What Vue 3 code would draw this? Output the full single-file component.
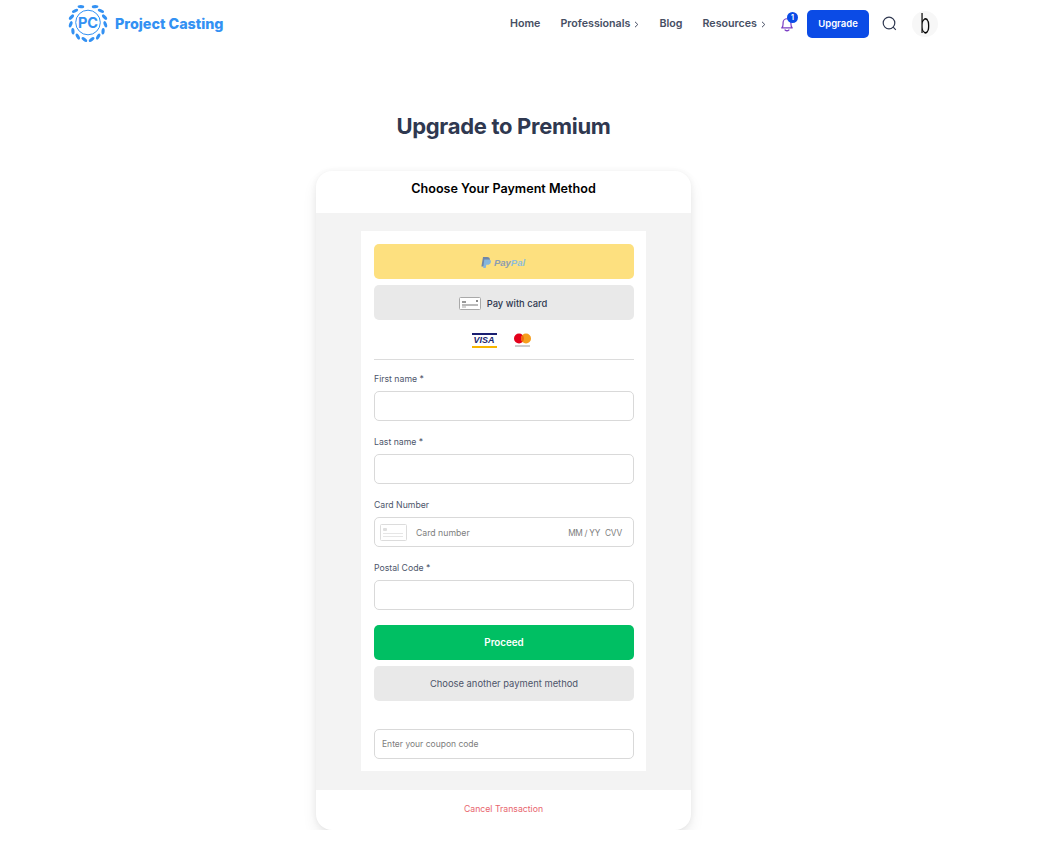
<template>
  <div class="page">
    <header class="nav">
      <a class="logo" href="#">
        <span class="logo-mark">
          <svg class="laurel" width="40" height="40" viewBox="0 0 40 40">
            <circle cx="20" cy="18.500" r="12.300" fill="none" stroke="#3391f3" stroke-width="1" />
            <g fill="#3391f3">
              <ellipse v-for="leaf in leaves" :key="leaf.id" :cx="leaf.x" :cy="leaf.y" rx="1.600" ry="3.300" :transform="`rotate(${leaf.r} ${leaf.x} ${leaf.y})`" />
            </g>
          </svg>
          <span class="logo-pc">PC</span>
        </span>
        <span class="logo-text">Project Casting</span>
      </a>

      <nav class="menu">
        <a v-for="item in menuItems" :key="item.label" class="menu-link" href="#">
          {{ item.label }}
          <svg v-if="item.arrow" width="5" height="7" viewBox="0 0 5 7" class="chev"><path d="M1 .8 3.800 3.500 1 6.200" fill="none" stroke="#464e63" stroke-width="1" /></svg>
        </a>
      </nav>

      <span class="bell">
        <svg width="14" height="16" viewBox="0 0 16 18" fill="none" stroke="#7b3fc4" stroke-width="1.400">
          <path d="M2 13.500c1.200-1.200 1.500-2.200 1.500-4.500V7.600C3.500 5 5.500 3 8 3s4.500 2 4.500 4.600V9c0 2.300.3 3.300 1.500 4.500z" stroke-linejoin="round" />
          <path d="M5.800 15.800c1.200 1 3.200 1 4.400 0" stroke-linecap="round" />
        </svg>
        <span class="bell-badge">1</span>
      </span>
      <button class="upgrade">Upgrade</button>
      <svg class="search" width="15" height="15" viewBox="0 0 15 15" fill="none" stroke="#2f3850" stroke-width="1.200">
        <circle cx="7" cy="7" r="5.800" />
        <path d="m11.200 11.200 2.600 2.600" />
      </svg>
      <span class="avatar"><span class="avatar-letter">b</span></span>
    </header>

    <main class="main">
      <h1 class="title">Upgrade to Premium</h1>

      <section class="card">
        <div class="card-head">Choose Your Payment Method</div>
        <div class="card-body">
          <div class="panel">
            <button class="pay pay-paypal">
              <svg width="10" height="12" viewBox="0 0 10 12">
                <path d="M2 0h4c2.200 0 3.200 1.200 2.800 3-.4 2-1.800 3-3.800 3H3.500L2.800 9.500H.4z" fill="#6f86a8" />
                <path d="M3.300 2.500h4.200c1.800 0 2.700.9 2.400 2.500-.3 1.900-1.700 2.800-3.500 2.800H5.300l-.6 3.200H2.200z" fill="#86b6dc" />
              </svg>
              <span class="paypal-word"><b>Pay</b><i>Pal</i></span>
            </button>
            <button class="pay pay-card">
              <svg width="22" height="13" viewBox="0 0 22 13">
                <rect x=".5" y=".5" width="21" height="12" rx="1" fill="#fff" stroke="#a9a9a9" />
                <rect x="3" y="4" width="4" height="2" fill="#999" />
                <rect x="3" y="7.500" width="16" height="1" fill="#777" />
                <rect x="3" y="9.500" width="4" height="1" fill="#aaa" />
                <rect x="17" y="3" width="2" height="2" fill="#888" />
              </svg>
              <span>Pay with card</span>
            </button>

            <div class="brands">
              <span class="visa">VISA</span>
              <svg width="17" height="15" viewBox="0 0 17 15">
                <circle cx="5" cy="5.500" r="5" fill="#e3001b" />
                <circle cx="12" cy="5.500" r="5" fill="#f59e1d" />
                <path d="M8.500 2a5 5 0 0 1 0 7 5 5 0 0 1 0-7z" fill="#f2650f" />
                <rect x="1" y="12.500" width="15" height="1" fill="#9a9a9a" />
              </svg>
            </div>
            <hr class="rule" />

            <label class="field-label">First name *</label>
            <div class="input"></div>
            <label class="field-label">Last name *</label>
            <div class="input"></div>
            <label class="field-label">Card Number</label>
            <div class="input card-input">
              <svg width="27" height="17" viewBox="0 0 27 17">
                <rect x=".5" y=".5" width="26" height="16" rx="1" fill="#fff" stroke="#dcdcdc" />
                <rect x="3" y="4" width="4" height="3" rx="1" fill="#dedede" />
                <rect x="3" y="9" width="20" height="1" fill="#e6e6e6" />
                <rect x="3" y="12" width="20" height="1" fill="#e6e6e6" />
              </svg>
              <span class="ph-number">Card number</span>
              <span class="ph-date">MM / YY</span>
              <span class="ph-cvv">CVV</span>
            </div>
            <label class="field-label">Postal Code *</label>
            <div class="input"></div>

            <button class="pay proceed">Proceed</button>
            <button class="pay another">Choose another payment method</button>

            <div class="input coupon">Enter your coupon code</div>
          </div>
        </div>
        <div class="card-foot">Cancel Transaction</div>
      </section>
    </main>
  </div>
</template>

<script setup>
const menuItems = [
  { label: 'Home' },
  { label: 'Professionals', arrow: true },
  { label: 'Blog' },
  { label: 'Resources', arrow: true }
]

// laurel leaves around the PC badge
const leaves = []
for (let i = 0; i < 7; i++) {
  const deg = 258 - i * 24
  const a = deg * Math.PI / 180
  const x = 20 + Math.cos(a) * 17.4
  const y = 18.5 - Math.sin(a) * 17.4
  const r = 180 - deg + 25
  leaves.push({ id: `l${i}`, x, y, r })
  leaves.push({ id: `r${i}`, x: 40 - x, y, r: -r })
}
</script>

<style>
html, body {
  margin: 0;
  background: #fff;
}
</style>

<style scoped>
.page {
  width: 1007px;
  font-family: Inter, "Liberation Sans", sans-serif;
  color: #2f3850;
}

/* Navigation */
.nav {
  display: flex;
  align-items: center;
  height: 47px;
  padding-left: 68px;
  padding-right: 69px;
}

.logo {
  display: flex;
  align-items: center;
  text-decoration: none;
  margin-right: auto;
}

.logo-mark {
  position: relative;
  width: 40px;
  height: 40px;
  display: block;
}

.laurel {
  display: block;
}

.logo-pc {
  position: absolute;
  inset: 0 0 3px 0;
  display: flex;
  align-items: center;
  justify-content: center;
  font-size: 14.500px;
  font-weight: 700;
  color: #3391f3;
}

.logo-text {
  margin-left: 7px;
  font-size: 14.300px;
  font-weight: 800;
  color: #3391f3;
}

.menu {
  display: flex;
  align-items: center;
  gap: 20px;
}

.menu-link {
  display: flex;
  align-items: center;
  gap: 4px;
  font-size: 10.700px;
  font-weight: 600;
  color: #464e63;
  text-decoration: none;
}

.chev {
  margin-top: 1px;
}

.bell {
  position: relative;
  display: block;
  width: 14px;
  height: 16px;
  margin-left: 14px;
  margin-top: 1px;
}

.bell svg {
  display: block;
}

.bell-badge {
  position: absolute;
  top: -4px;
  right: -4px;
  width: 11px;
  height: 11px;
  border-radius: 50%;
  background: #0b4be6;
  color: #fff;
  font-size: 7px;
  font-weight: 700;
  line-height: 11px;
  text-align: center;
}

.upgrade {
  width: 62px;
  height: 28px;
  margin-left: 13px;
  border: none;
  border-radius: 5px;
  background: #0b4be6;
  color: #fff;
  font-family: inherit;
  font-size: 9.500px;
  font-weight: 600;
  padding: 0;
}

.search {
  margin-left: 13px;
}

.avatar {
  width: 26px;
  height: 26px;
  margin-left: 15px;
  border-radius: 50%;
  background: #f7f7f7;
  display: flex;
  justify-content: center;
}

.avatar-letter {
  display: block;
  color: #000;
  font-size: 27px;
  font-weight: 300;
  line-height: 26px;
  transform: scaleX(0.62);
  will-change: transform;
}

/* Main */
.main {
  display: flex;
  flex-direction: column;
  align-items: center;
}

.title {
  margin: 64px 0 30px;
  font-size: 22px;
  line-height: 30px;
  font-weight: 700;
  letter-spacing: -0.3px;
  color: #2f3850;
}

.card {
  width: 375px;
  border-radius: 16px;
  background: #fff;
  box-shadow: 0 8px 16px -2px rgba(0, 0, 0, 0.1), 0 0 6px rgba(0, 0, 0, 0.06);
  overflow: hidden;
}

.card-head {
  height: 42px;
  padding-top: 10px;
  box-sizing: border-box;
  text-align: center;
  font-size: 12.600px;
  line-height: 16px;
  font-weight: 600;
  color: #000;
}

.card-body {
  background: #f3f3f3;
  padding: 18px 45px 19px;
}

.panel {
  background: #fff;
  padding: 13px 12px 12px 13px;
  height: 540px;
  box-sizing: border-box;
  display: flex;
  flex-direction: column;
}

.pay {
  flex: none;
  display: flex;
  align-items: center;
  justify-content: center;
  height: 35px;
  border: none;
  border-radius: 5px;
  padding: 0;
  font-family: inherit;
  font-size: 9.400px;
  font-weight: 500;
  color: #2f3850;
}

.pay-paypal {
  background: #fde07f;
  gap: 3px;
  padding: 2px 2px 0 0;
}

.paypal-word {
  font-family: "Liberation Sans", sans-serif;
  font-size: 9.500px;
  font-style: italic;
  font-weight: 700;
}

.paypal-word b {
  color: #8d9db0;
}

.paypal-word i {
  color: #8fbedb;
}

.pay-card {
  margin-top: 6px;
  background: #e9e9e9;
  gap: 6px;
  padding-right: 2px;
  padding-top: 1px;
}

.brands {
  flex: none;
  display: flex;
  align-items: flex-start;
  justify-content: center;
  gap: 17px;
  height: 17px;
  margin-top: 13px;
  padding-right: 6px;
}

.visa {
  width: 25px;
  height: 15px;
  box-sizing: border-box;
  border-top: 2px solid #1a1f71;
  border-bottom: 2px solid #f7b600;
  font-family: "Liberation Sans", sans-serif;
  font-size: 9px;
  font-weight: 700;
  font-style: italic;
  line-height: 11px;
  text-align: center;
  color: #1a1f71;
}

.rule {
  flex: none;
  margin: 9px 0 0;
  border: none;
  border-top: 1px solid #dcdcdc;
}

.field-label {
  flex: none;
  display: block;
  margin-top: 13px;
  height: 12px;
  font-size: 8.700px;
  line-height: 12px;
  color: #4d556a;
}

.input {
  flex: none;
  height: 30px;
  margin-top: 6px;
  margin-bottom: 2px;
  box-sizing: border-box;
  border: 1px solid #d9d9d9;
  border-radius: 5px;
  background: #fff;
}

.card-input {
  display: flex;
  align-items: center;
  padding: 0 11px 0 5px;
  font-size: 8.700px;
  color: #7d7d7d;
}

.card-input span {
  margin-top: 1px;
}

.ph-number {
  margin-left: 9px;
  margin-right: auto;
}

.ph-date {
  font-size: 8.300px;
  letter-spacing: -0.3px;
}

.ph-cvv {
  margin-left: 5px;
  font-size: 8.300px;
  letter-spacing: -0.2px;
}

.proceed {
  margin-top: 13px;
  background: #00bf63;
  color: #fff;
  font-size: 9.800px;
  font-weight: 600;
}

.another {
  margin-top: 6px;
  background: #e9e9e9;
  font-weight: 400;
  color: #4d556a;
}

.coupon {
  margin-top: 28px;
  margin-bottom: 0;
  padding-left: 7px;
  display: flex;
  align-items: center;
  font-size: 8.500px;
  color: #7d7d7d;
}

.card-foot {
  height: 40px;
  line-height: 38px;
  text-align: center;
  font-size: 8.700px;
  color: #e8656d;
}
</style>
